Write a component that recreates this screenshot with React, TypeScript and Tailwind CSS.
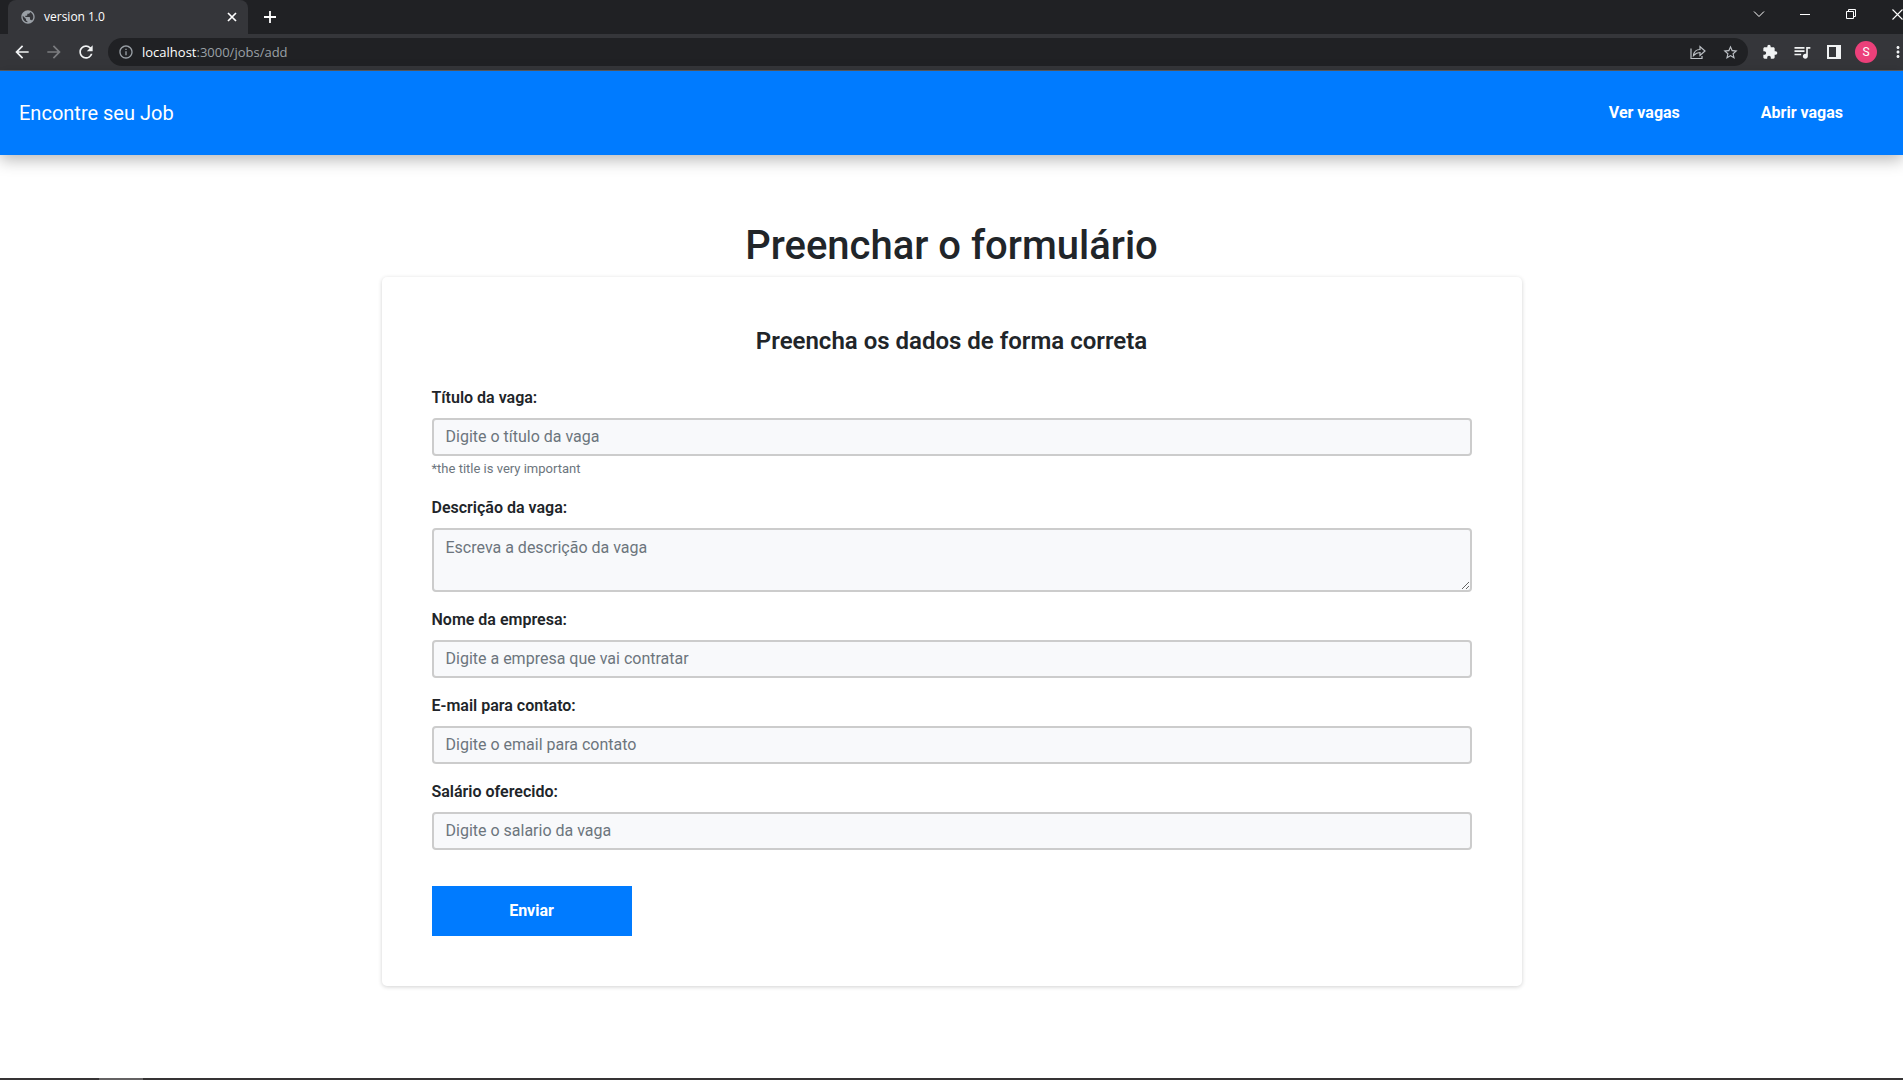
import type { ReactNode } from "react";
import { MdPublic, MdExtension, MdQueueMusic, MdInfoOutline, MdStarBorder, MdArrowBack, MdArrowForward, MdRefresh, MdMoreVert } from "react-icons/md";

const control =
  "block w-full rounded-[4px] border-2 border-[#cccccc] bg-[#f8f9fb] px-3 text-base leading-6 text-[#495057] placeholder:text-[#6c757d] placeholder:opacity-100 outline-none focus:border-[#007bff]";

function TabStrip() {
  return (
    <div className="flex h-[34px] bg-[#202124] pl-2">
      <div className="flex h-full w-[240px] items-center rounded-t-lg bg-[#35363a] pr-2 pl-3 pb-[1px] text-white">
        <MdPublic className="size-4 text-[#9aa0a6]" />
        <span className="ml-2 flex-1 text-[12px]">version 1.0</span>
        <button aria-label="Fechar guia" className="flex size-4 items-center justify-center">
          <svg viewBox="0 0 10 10" className="size-[10px]" stroke="currentColor" strokeWidth="1.7"><path d="M1 1l8 8M9 1l-8 8" /></svg>
        </button>
      </div>
      <button aria-label="Nova guia" className="ml-4 flex items-center text-white">
        <svg viewBox="0 0 12 12" className="size-3" stroke="currentColor" strokeWidth="1.8"><path d="M6 0v12M0 6h12" /></svg>
      </button>
      <div className="ml-auto flex h-7 items-center text-white">
        <button aria-label="Pesquisar guias" className="flex w-[46px] justify-center">
          <svg viewBox="0 0 12 12" className="size-3" fill="none" stroke="currentColor"><path d="M1 3.500l5 5 5-5" /></svg>
        </button>
        <button aria-label="Minimizar" className="flex w-[46px] justify-center">
          <svg viewBox="0 0 10 10" className="size-[10px]" stroke="currentColor"><path d="M0 5.500h10" /></svg>
        </button>
        <button aria-label="Restaurar" className="flex w-[46px] justify-center">
          <svg viewBox="0 0 10 10" className="size-[10px]" fill="none" stroke="currentColor"><path d="M.5 2.500h7v7h-7zM2.500 2.500v-2h7v7h-2" /></svg>
        </button>
        <button aria-label="Fechar" className="flex w-[29px] justify-end">
          <svg viewBox="0 0 11 11" className="size-[11px]" stroke="currentColor" strokeWidth="1.1"><path d="M.5.5l10 10M10.500.5l-10 10" /></svg>
        </button>
      </div>
    </div>
  );
}

function ToolButton({ label, children }: { label: string; children: ReactNode }) {
  return (
    <button aria-label={label} className="flex w-8 shrink-0 items-center justify-center">
      {children}
    </button>
  );
}

function Toolbar() {
  return (
    <div className="flex h-[37px] items-center border-b border-[#5b5c5f] bg-[#35363a] pl-1.5 text-[#f1f3f4]">
      <ToolButton label="Voltar"><MdArrowBack className="size-5" /></ToolButton>
      <ToolButton label="Avançar"><MdArrowForward className="size-5 text-[#7b7c7f]" /></ToolButton>
      <ToolButton label="Recarregar"><MdRefresh className="size-5" /></ToolButton>
      <div className="ml-1.5 flex h-7 flex-1 items-center rounded-full bg-[#202124] pr-0.5 pl-2.5">
        <MdInfoOutline className="size-4 text-[#9aa0a6]" />
        <span className="ml-2 flex-1 text-[13px] text-[#9aa0a6]">
          <span className="text-white">localhost</span>:3000/jobs/add
        </span>
        <ToolButton label="Compartilhar">
          <svg viewBox="0 0 16 16" className="size-4 text-[#bdc1c6]" fill="none" stroke="currentColor" strokeWidth="1.2">
            <path d="M1 4.500v10h11V12" />
            <path d="M3.500 11.500c.5-4 2.500-6 6.500-6V2.500l5 4.500-5 4.500V8.500c-3 0-4.500 1-6.500 3z" />
          </svg>
        </ToolButton>
        <ToolButton label="Favoritos"><MdStarBorder className="size-[17px] text-[#bdc1c6]" /></ToolButton>
      </div>
      <div className="ml-1.5 flex">
        <ToolButton label="Extensões"><MdExtension className="size-4" /></ToolButton>
        <ToolButton label="Mídia"><MdQueueMusic className="size-5" /></ToolButton>
        <ToolButton label="Painel lateral">
          <svg viewBox="0 0 14 14" className="size-[14px]"><path fill="currentColor" fillRule="evenodd" d="M0 0h14v14H0zM2 2v10h7V2z" /></svg>
        </ToolButton>
        <ToolButton label="Perfil">
          <span className="flex size-[22px] items-center justify-center rounded-full bg-[#ec407a] font-['Roboto'] text-[12px] text-white">S</span>
        </ToolButton>
        <button aria-label="Menu" className="flex w-[21px] items-center justify-end overflow-hidden">
          <MdMoreVert className="-mr-1 size-[18px] shrink-0" />
        </button>
      </div>
    </div>
  );
}

function Field({ id, label, placeholder, type = "text", hint }: { id: string; label: string; placeholder: string; type?: string; hint?: string }) {
  return (
    <div className="mb-4">
      <label htmlFor={id} className="mb-2 block font-semibold">{label}</label>
      <input id={id} type={type} placeholder={placeholder} className={`${control} py-[5px]`} />
      {hint && <small className="mt-1 block pb-0.5 text-[13px] leading-[18px] text-[#6c757d]">{hint}</small>}
    </div>
  );
}

export default function App() {
  return (
    <div className="flex min-h-screen flex-col bg-white font-['Roboto',sans-serif] text-base leading-6 text-[#212529]">
      <div className="font-['Open_Sans',sans-serif] leading-4">
        <TabStrip />
        <Toolbar />
      </div>
      <header className="flex h-[84px] items-center justify-between bg-[#007bff] pr-[60px] pl-[19px] text-white shadow-[0_5px_15px_rgba(0,0,0,0.28)]">
        <a href="#" className="text-[20px]">Encontre seu Job</a>
        <nav className="flex gap-[81px] font-bold">
          <a href="#">Ver vagas</a>
          <a href="#">Abrir vagas</a>
        </nav>
      </header>
      <main className="mx-auto w-full max-w-[1140px] flex-1 pt-[67px]">
        <h1 className="mb-[7px] text-center text-[40px] leading-12 font-medium">Preenchar o formulário</h1>
        <form className="rounded-[5px] p-[50px] shadow-[0_1px_4px_rgba(0,0,0,0.18)]">
          <h2 className="mb-[30px] text-center text-[24px] leading-[29px] font-semibold">Preencha os dados de forma correta</h2>
          <Field id="title" label="Título da vaga:" placeholder="Digite o título da vaga" hint="*the title is very important" />
          <div className="mb-4">
            <label htmlFor="description" className="mb-2 block font-semibold">Descrição da vaga:</label>
            <textarea id="description" rows={2} placeholder="Escreva a descrição da vaga" className={`${control} py-1.5`} />
          </div>
          <Field id="company" label="Nome da empresa:" placeholder="Digite a empresa que vai contratar" />
          <Field id="email" type="email" label="E-mail para contato:" placeholder="Digite o email para contato" />
          <Field id="salary" label="Salário oferecido:" placeholder="Digite o salario da vaga" />
          <button type="submit" className="mt-9 block h-[50px] w-[200px] bg-[#007bff] font-bold text-white">Enviar</button>
        </form>
      </main>
      <footer className="flex h-0.5 bg-[#363435] pl-[99px]">
        <span className="w-[44px] bg-[#646263]" />
      </footer>
    </div>
  );
}
